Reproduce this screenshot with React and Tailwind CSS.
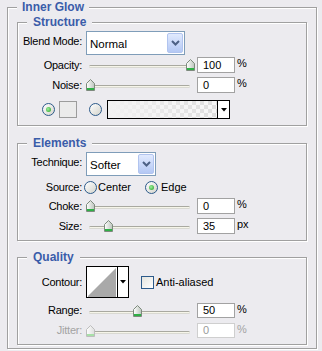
const font = { fontFamily: '"Liberation Sans", Arial, sans-serif' };

const Group = ({ title, className = '', legendClass = '', children }) => (
  <fieldset className={`border border-[#a0a0a0] shadow-[inset_1px_1px_0_#fff,1px_1px_0_#fff] ${className}`}>
    <legend className={`bg-[#ecebef] px-[5px] text-[12px] leading-[14px] font-bold text-[#3a5ca9] ${legendClass}`}>{title}</legend>
    {children}
  </fieldset>
);

const Label = ({ children, dim, className = '' }) => (
  <span className={`w-[64px] shrink-0 text-right tracking-[-0.25px] ${dim ? 'text-[#a3a3a3]' : 'text-black'} ${className}`}>{children}</span>
);

const Chevron = () => (
  <svg width="9" height="6" viewBox="0 0 9 6">
    <path d="M1 1 L4.5 4.5 L8 1" fill="none" stroke="#4d6185" strokeWidth="2" />
  </svg>
);

const Select = ({ value, width }) => (
  <div className={`ml-[4px] flex h-[24px] items-stretch border border-[#7f9db9] bg-white ${width}`}>
    <span className="flex flex-1 items-center pl-[3px] pt-[2px] text-[11.5px]">{value}</span>
    <span className="m-[1px] flex w-[16px] items-center justify-center rounded-[2px] border border-[#b1c4ef] bg-gradient-to-b from-[#e1eafe] to-[#b4c8f4]">
      <Chevron />
    </span>
  </div>
);

const Thumb = ({ dim }) => (
  <svg width="9" height="12" viewBox="0 0 9 12">
    <defs>
      <linearGradient id={dim ? 'td' : 'tn'} x1="0" y1="0" x2="1" y2="0">
        <stop offset="0" stopColor="#ffffff" />
        <stop offset="1" stopColor={dim ? '#dedede' : '#bcc4bc'} />
      </linearGradient>
    </defs>
    <path d="M0.5 4.5 L4.5 0.5 L8.5 4.5 L8.5 11.5 L0.5 11.5 Z" fill={`url(#${dim ? 'td' : 'tn'})`} stroke={dim ? '#bdbdbd' : '#7d8a7d'} />
    <rect x="1" y="9" width="7" height="2" fill={dim ? '#a8dfa8' : '#2fb046'} />
  </svg>
);

const Slider = ({ left, dim }) => (
  <div className="relative ml-[4px] h-[16px] w-[108px] shrink-0">
    <div className="absolute left-[3px] right-[4px] top-[8px] h-[3px] rounded-full border-t border-[#a9a9a0] border-b border-b-[#d9d9d2] bg-[#f6f5e9]" />
    <div className="absolute top-[2px]" style={{ left }}>
      <Thumb dim={dim} />
    </div>
  </div>
);

const NumInput = ({ value, unit, dim, h = 'h-[16px]' }) => (
  <>
    <span className={`ml-[3px] flex w-[38px] items-center border bg-white pl-[5px] ${h} ${dim ? 'border-[#cfcfcf] text-[#9a9a9a]' : 'border-[#a2a2a2] text-black'}`}>{value}</span>
    <span className={`ml-[2px] self-start leading-[12px] ${dim ? 'text-[#a3a3a3]' : 'text-black'}`}>{unit}</span>
  </>
);

const Radio = ({ checked, className = '' }) => (
  <span className={`flex h-[13px] w-[13px] shrink-0 items-center justify-center rounded-full border border-[#2c5a8a] bg-gradient-to-br from-white to-[#d4d4cc] ${className}`}>
    {checked && <span className="h-[5px] w-[5px] rounded-full bg-[radial-gradient(circle_at_40%_40%,#9ef09e,#1f9e1f)]" />}
  </span>
);

const SliderRow = ({ label, left, value, unit, dim, className = '', h }) => (
  <div className={`flex items-center ${h || 'h-[16px]'} ${className}`}>
    <Label dim={dim}>{label}</Label>
    <Slider left={left} dim={dim} />
    <NumInput value={value} unit={unit} dim={dim} h={h} />
  </div>
);

export default function App() {
  return (
    <div className="h-[351px] w-[322px] overflow-hidden bg-[#ecebef] text-[11px] leading-[13px]" style={font}>
      <Group title="Inner Glow" className="ml-[7px] w-[310px]" legendClass="ml-[9px]">
        <div className="px-[9px] pb-[3px] pt-[1px]">
          <Group title="Structure" legendClass="ml-[9px] px-[6px]">
            <div className="pb-[6px] pt-[2px]">
              <div className="flex h-[24px] items-start">
                <Label className="pt-[4px]">Blend Mode:</Label>
                <Select value="Normal" width="w-[99px]" />
              </div>
              <SliderRow label="Opacity:" left={100} value="100" unit="%" className="mt-[2px]" />
              <SliderRow label="Noise:" left={0} value="0" unit="%" className="mt-[4px]" />
              <div className="mt-[7px] flex h-[19px] items-center">
                <Radio checked className="ml-[24px]" />
                <span className="ml-[4px] h-[17px] w-[18px] border border-[#9c9c9c] bg-[#ebebeb]" />
                <Radio className="ml-[12px]" />
                <div className="ml-[5px] flex h-[19px] w-[123px] border border-black">
                  <div className="relative flex-1 bg-[repeating-conic-gradient(#dedede_0%_25%,#f7f7f7_0%_50%)] bg-[length:8px_8px]">
                    <div className="absolute inset-0 bg-gradient-to-r from-[#f2f2f2] to-transparent" />
                  </div>
                  <span className="flex w-[12px] items-center justify-center border-l border-black bg-white">
                    <svg width="6" height="4" viewBox="0 0 6 4"><path d="M0 0 H6 L3 3.5 Z" fill="#000" /></svg>
                  </span>
                </div>
              </div>
            </div>
          </Group>

          <Group title="Elements" className="mt-[10px]" legendClass="ml-[9px] px-[6px]">
            <div className="pb-[6px] pt-[2px]">
              <div className="flex h-[24px] items-start">
                <Label className="pt-[4px]">Technique:</Label>
                <Select value="Softer" width="w-[70px]" />
              </div>
              <div className="mt-[4px] flex h-[14px] items-center">
                <Label>Source:</Label>
                <Radio className="ml-[2px]" />
                <span className="ml-[1px] w-[47px]">Center</span>
                <Radio checked />
                <span className="ml-[3px]">Edge</span>
              </div>
              <SliderRow label="Choke:" left={0} value="0" unit="%" className="mt-[4px]" />
              <SliderRow label="Size:" left={18} value="35" unit="px" className="mt-[4px]" />
            </div>
          </Group>

          <Group title="Quality" className="mt-[9px]" legendClass="ml-[9px] px-[6px]">
            <div className="pb-[6px] pt-[2px]">
              <div className="flex h-[32px] items-center">
                <Label>Contour:</Label>
                <div className="ml-[4px] flex h-[32px] w-[43px] border border-black bg-white">
                  <svg width="30" height="30" viewBox="0 0 30 30" className="block">
                    <path d="M1 29 L29 1 L29 30 L1 30 Z" fill="#a9a9a9" />
                  </svg>
                  <span className="flex flex-1 items-center justify-center border-l border-black">
                    <svg width="6" height="4" viewBox="0 0 6 4"><path d="M0 0 H6 L3 3.5 Z" fill="#000" /></svg>
                  </span>
                </div>
                <span className="ml-[12px] h-[13px] w-[13px] border border-[#2c5a8a] bg-gradient-to-br from-[#e4e4de] to-white" />
                <span className="ml-[2px]">Anti-aliased</span>
              </div>
              <SliderRow label="Range:" left={47} value="50" unit="%" className="mt-[5px]" h="h-[15px]" />
              <SliderRow label="Jitter:" left={0} value="0" unit="%" dim className="mt-[5px]" h="h-[15px]" />
            </div>
          </Group>
        </div>
      </Group>
    </div>
  );
}
